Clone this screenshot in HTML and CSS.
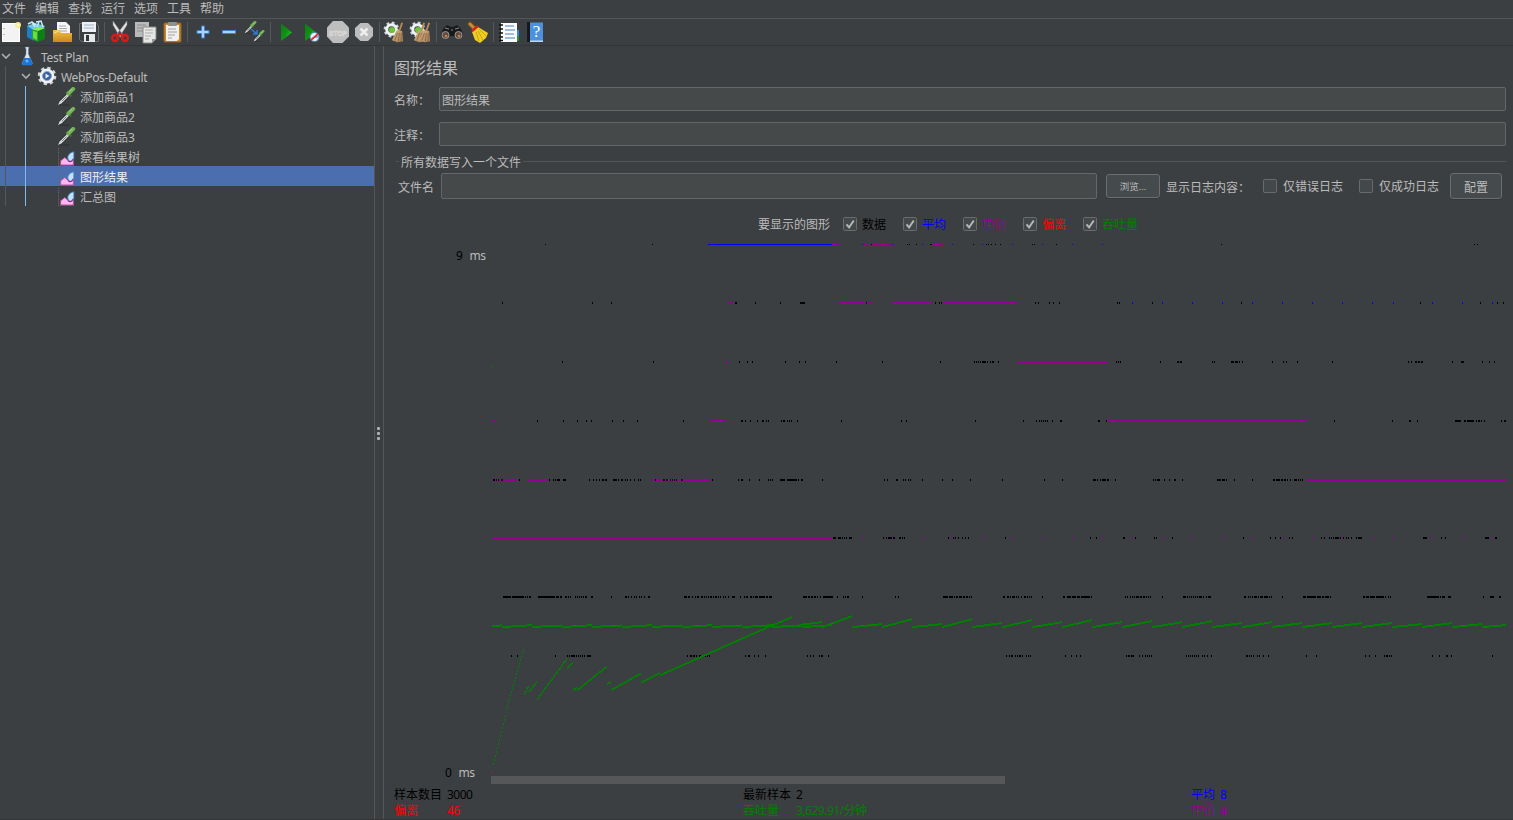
FILE: index.html
```html
<!DOCTYPE html>
<html lang="zh-CN">
<head>
<meta charset="utf-8">
<title>图形结果</title>
<link rel="stylesheet" href="styles.css">
</head>
<body>
<svg class="defs" width="0" height="0">
  <defs>
    <linearGradient id="gGreen" x1="0" y1="0" x2="1" y2="1"><stop offset="0" stop-color="#0a7d10"/><stop offset=".5" stop-color="#0f9216"/><stop offset="1" stop-color="#2be02f"/></linearGradient>
    <linearGradient id="gGold" x1="0" y1="0" x2="0" y2="1"><stop offset="0" stop-color="#f3bd4c"/><stop offset="1" stop-color="#c98a16"/></linearGradient>
    <linearGradient id="gStraw" x1="0" y1="0" x2="1" y2="1"><stop offset="0" stop-color="#d6b183"/><stop offset="1" stop-color="#a37f56"/></linearGradient>
    <symbol id="pipette" viewBox="0 0 20 20">
      <path d="M1 19l2-5 8-8 3 3-8 8z" fill="#23272a"/><path d="M1 19l2-4 8-8 2 2-8 8z" fill="#d8dcd8"/><path d="M5 15l5-5" stroke="#777" stroke-width="1"/>
      <path d="M10 5l5 5" stroke="#3f6b33" stroke-width="2.4"/><path d="M12 7l5-5" stroke="#72b357" stroke-width="4.2" stroke-linecap="round"/><path d="M13 5l3-3" stroke="#a6d58d"/><path d="M3 19h10" stroke="#2b2e30"/>
    </symbol>
    <symbol id="listener" viewBox="0 0 18 18">
      <path d="M1.500 1v16.500H17" fill="none" stroke="#686b6d" stroke-dasharray="1 1"/>
      <path d="M3.500 17v-4l4-3 2 2 3 2 3-3v6z" fill="#ffb6f3" stroke="#b84d9a" stroke-width=".8"/>
      <path d="M16 4.500c-5 1-7 5-5 8 2 3 5 0 5-2z" fill="#bfe2ff" stroke="#3d7cc8" stroke-width=".8"/><path d="M10.500 13c2 2 4 0 5-2" fill="none" stroke="#8d2378"/>
    </symbol>
    <symbol id="gear" viewBox="0 0 20 20">
      <circle cx="10" cy="10" r="7.800" fill="none" stroke="#cfd3d8" stroke-width="3" stroke-dasharray="3.200 2.930"/><circle cx="10" cy="10" r="5.600" fill="none" stroke="#eef0f3" stroke-width="3.600"/>
    </symbol>
    <symbol id="broomhead" viewBox="0 0 14 22">
      <path d="M12 1L9 10" stroke="#b58a55" stroke-width="2"/><path d="M6 9l6 1 1 11-6 1-6-2z" fill="url(#gStraw)"/><path d="M7 12l-3 8M9 12l-1 9M11 12v9" stroke="#785733" stroke-width=".7"/>
    </symbol>
    <symbol id="chevron" viewBox="0 0 12 12"><path d="M2 4l4 4 4-4" fill="none" stroke="#a9abad" stroke-width="1.700"/></symbol>
    <symbol id="tick" viewBox="0 0 14 14"><rect x=".5" y=".5" width="13" height="13" rx="1" fill="#43494a" stroke="#6b6b6b"/><path d="M3.500 7.300l2.600 3L10.800 3.500" fill="none" stroke="#b4b6b7" stroke-width="2"/></symbol>
    <symbol id="box" viewBox="0 0 14 14"><rect x=".5" y=".5" width="13" height="13" rx="1" fill="#43494a" stroke="#6b6b6b"/></symbol>
  </defs>
</svg>

<div class="app">
  <nav class="menu"><span>文件</span><span>编辑</span><span>查找</span><span>运行</span><span>选项</span><span>工具</span><span>帮助</span></nav>

  <div class="toolbar">
    <svg class="tool" viewBox="0 0 24 24"><rect x="3.500" y="3.500" width="17" height="18" fill="#f3f3f3" stroke="#fff"/><path d="M5 8v1M5 14v1" stroke="#888"/><circle cx="19" cy="5" r="3" fill="#f7ee86"/><circle cx="19" cy="5" r="1.300" fill="#fffbd0"/></svg>
    <svg class="tool" viewBox="0 0 24 24"><path d="M2 6l7 2v13l-7-4z" fill="#1b7fc4"/><path d="M2 6l8-3 10 3-2 3-9 1z" fill="#6fc6ee"/><path d="M3 4l4-2 3 5M11 2l5-1 2 6M7 2l4 3M14 2l-2 5" stroke="#c5eaf9" stroke-width="1.500" fill="none"/><path d="M7 9l6 2v11l-6-3z" fill="#25a32c"/><path d="M13 11l7-3v11l-7 3z" fill="#0d7f18"/><path d="M7 9l7-2 6 1-7 3z" fill="#84ed58"/><path d="M8 11l4 1v8l-4-2z" fill="#69dd42"/></svg>
    <svg class="tool" viewBox="0 0 24 24"><path d="M3 10h8v12H3z" fill="#b97e16"/><path d="M6 2h9l4 4v9H6z" fill="#f6f6f6"/><path d="M8 6h7M8 8.500h8M8 11h8" stroke="#a8a8a8"/><path d="M2 10h6l2 3h11v9H2z" fill="url(#gGold)"/><path d="M3 13l5-2" stroke="#ffe09b"/></svg>
    <svg class="tool" viewBox="0 0 24 24"><path d="M2.500 3.500h17l2 2v16h-17l-2-2z" fill="#3b3f42" stroke="#686c6f"/><rect x="5" y="2" width="14" height="10" fill="#eef1f4"/><path d="M7 5h10M7 8h10" stroke="#9bb4c6"/><rect x="7" y="14" width="11" height="8" fill="#e8e8e8"/><rect x="9" y="15" width="3" height="6" fill="#33383b"/></svg>
    <i class="sep"></i>
    <svg class="tool" viewBox="0 0 24 24"><path d="M5 1l10 14-3 2L5 5zM19 1L9 14l3 2 7-11z" fill="#e2e2e2" stroke="#888" stroke-width=".5"/><path d="M11 12l2 3" stroke="#555"/><ellipse cx="7" cy="18" rx="2.800" ry="3" fill="none" stroke="#df1717" stroke-width="2.500"/><ellipse cx="17" cy="18" rx="2.800" ry="3" fill="none" stroke="#df1717" stroke-width="2.500"/><path d="M9 16l3-2 3 2" stroke="#df1717" stroke-width="2" fill="none"/></svg>
    <svg class="tool" viewBox="0 0 24 24"><path d="M1 2h14v15H1z" fill="#b9bbba"/><path d="M3 5h9M3 8h9M3 11h6" stroke="#8d8f8e"/><path d="M9 7h13v12l-4 4H9z" fill="#e6e6e4" stroke="#888"/><path d="M11 10h8M11 13h8M11 16h6M11 19h4" stroke="#adadab"/><path d="M18 23v-4h4" fill="#999"/></svg>
    <svg class="tool" viewBox="0 0 24 24"><rect x="4" y="3" width="17" height="19" rx="1" fill="#c8872b" stroke="#94601a"/><path d="M6 5h13v14l-2 2H6z" fill="#f0f0ee"/><rect x="8" y="2" width="9" height="4" rx="1" fill="#8d9190"/><path d="M8 9h8M8 12h9M8 15h7M8 18h4" stroke="#a0a0a0"/></svg>
    <i class="sep"></i>
    <svg class="tool" viewBox="0 0 24 24"><path d="M10.500 6h3v4.500H18v3h-4.500V18h-3v-4.500H6v-3h4.500z" fill="#a8d2ff" stroke="#4180cb"/></svg>
    <svg class="tool" viewBox="0 0 24 24"><rect x="5.500" y="10.500" width="13" height="3" fill="#a8d2ff" stroke="#4180cb"/></svg>
    <svg class="tool" viewBox="0 0 24 24"><use href="#pipette" x="1" y="1" width="13" height="13"/><use href="#pipette" x="10" y="10" width="12" height="12"/><path d="M8 9l6 5m0-4v4h-4" fill="none" stroke="#287bdd" stroke-width="1.500"/></svg>
    <i class="sep"></i>
    <svg class="tool" viewBox="0 0 24 24"><path d="M7 3.500L18 12.500 7 21z" fill="url(#gGreen)"/></svg>
    <svg class="tool" viewBox="0 0 24 24"><path d="M5 3.500L16 12.500 5 21z" fill="url(#gGreen)"/><circle cx="14.500" cy="17" r="4.500" fill="#e8f2fb" stroke="#4e7fae"/><path d="M11 20l7-6" stroke="#e02b2b" stroke-width="1.700"/><path d="M15 17h3" stroke="#246ebb"/></svg>
    <svg class="tool" viewBox="0 0 24 24"><path d="M7 1h9.500L23 7.500v9L16.500 23H7L1 16.500v-9z" fill="#bebebe"/><text x="12" y="15.500" class="stop" textLength="18" lengthAdjust="spacingAndGlyphs">STOP</text></svg>
    <svg class="tool" viewBox="0 0 24 24"><path d="M8.500 3h7.500l5 5v8l-5 5H8.500l-5.500-5V8z" fill="#bdbdbd"/><path d="M8.500 8.500l7 7m0-7l-7 7" stroke="#eee" stroke-width="2.600"/></svg>
    <i class="sep"></i>
    <svg class="tool" viewBox="0 0 24 24"><use href="#gear" x="0" y="1" width="17" height="17"/><circle cx="9" cy="10" r="3" fill="#6dc437"/><use href="#broomhead" x="8" y="1" width="13" height="22"/></svg>
    <svg class="tool" viewBox="0 0 24 24"><use href="#gear" x="0" y="1" width="17" height="17"/><circle cx="9" cy="10" r="3" fill="#6dc437"/><use href="#broomhead" x="4" y="1" width="13" height="22"/><use href="#broomhead" x="9" y="1" width="13" height="22"/></svg>
    <i class="sep"></i>
    <svg class="tool" viewBox="0 0 24 24"><path d="M3 9l4-4 4 2h2l4-2 4 4 2 6-4 4-5-3h-4l-5 3-4-4z" fill="#191919"/><path d="M5 8l4 1M15 9l4-1M11 10h2" stroke="#8a8a8a"/><circle cx="5.500" cy="15" r="3.500" fill="#624b3b" stroke="#999"/><circle cx="18.500" cy="15" r="3.500" fill="#624b3b" stroke="#999"/><circle cx="6" cy="16" r="1.300" fill="#bc8459"/><circle cx="19" cy="16" r="1.300" fill="#bc8459"/></svg>
    <svg class="tool" viewBox="0 0 24 24"><path d="M4 4l4 4" stroke="#6f4816" stroke-width="5" stroke-linecap="round"/><path d="M4 4l4 4" stroke="#c78b3b" stroke-width="3" stroke-linecap="round"/><path d="M6 12l6-5 10 6-2 5-6 5-5-3z" fill="#f0ce22"/><path d="M10 12l3 9M12 11l5 9M13 9l7 7" stroke="#b99a14" stroke-width=".8"/><path d="M6 11l6-5" stroke="#d2261e" stroke-width="2.500"/></svg>
    <i class="sep"></i>
    <svg class="tool" viewBox="0 0 24 24"><path d="M18 10h4v6h-4z" fill="#2c82e8"/><path d="M18 16h4v5h-4z" fill="#21952b"/><rect x="4" y="3" width="16" height="19" fill="#fafafa"/><path d="M2 5h4M2 9h4M2 13h4M2 17h4M2 20.500h4" stroke="#111" stroke-width="1.500"/><path d="M8 6h9M8 10h10M8 14h9M8 18h10" stroke="#4c82bf"/></svg>
    <svg class="tool" viewBox="0 0 24 24"><path d="M4 2.500h16V22H4z" fill="#4b91dd"/><path d="M4 2h3v20H4z" fill="#15191e"/><path d="M7 20.500h13V22H7z" fill="#bfd8f1"/><text x="13.500" y="17" class="help">?</text></svg>
  </div>

  <main class="body">
    <aside class="tree">
      <div class="node root"><svg class="chev"><use href="#chevron"/></svg><svg class="ico" viewBox="0 0 20 20"><path d="M8 1h4l-.5 2v5l4 9.500-1 1.500H6l-1-1.500L9 8V3z" fill="#dde8f3" stroke="#5c7690" stroke-width=".5"/><path d="M7.200 12h6l2.300 5.500-1 1.500H6l-1-1.500z" fill="#1b76d8"/><circle cx="10" cy="15" r="1.500" fill="#68b0f4"/></svg><span class="latin">Test Plan</span></div>
      <div class="node group"><svg class="chev"><use href="#chevron"/></svg><svg class="ico" viewBox="0 0 20 20"><use href="#gear" width="20" height="20"/><circle cx="10" cy="10" r="4.500" fill="#375f9a" stroke="#8fa8cc"/><path d="M8.500 7.500l4 2.500-4 2.500z" fill="#e3efff"/></svg><span class="latin">WebPos-Default</span></div>
      <div class="node leaf"><svg class="ico"><use href="#pipette"/></svg><span>添加商品1</span></div>
      <div class="node leaf"><svg class="ico"><use href="#pipette"/></svg><span>添加商品2</span></div>
      <div class="node leaf"><svg class="ico"><use href="#pipette"/></svg><span>添加商品3</span></div>
      <div class="node leaf"><svg class="ico"><use href="#listener"/></svg><span>察看结果树</span></div>
      <div class="node leaf selected"><svg class="ico"><use href="#listener"/></svg><span>图形结果</span></div>
      <div class="node leaf"><svg class="ico"><use href="#listener"/></svg><span>汇总图</span></div>
      <i class="guide outer"></i><i class="guide inner"></i>
    </aside>
    <div class="splitter"><i></i><i></i><i></i></div>

    <section class="panel">
      <h1>图形结果</h1>
      <label class="row"><span>名称：</span><span class="field">图形结果</span></label>
      <label class="row second"><span>注释：</span><span class="field"></span></label>
      <div class="legend"><i class="stub"></i><span>所有数据写入一个文件</span><i class="rule"></i></div>
      <div class="file">
        <span class="fname">文件名</span><span class="field"></span>
        <span class="btn small">浏览...</span>
        <span class="logs">显示日志内容：</span>
        <span class="check"><svg><use href="#box"/></svg>仅错误日志</span>
        <span class="check"><svg><use href="#box"/></svg>仅成功日志</span>
        <span class="btn">配置</span>
      </div>
      <div class="series">
        <span class="lead">要显示的图形</span>
        <span class="check black"><svg><use href="#tick"/></svg>数据</span>
        <span class="check blue"><svg><use href="#tick"/></svg>平均</span>
        <span class="check purple"><svg><use href="#tick"/></svg>中值</span>
        <span class="check red"><svg><use href="#tick"/></svg>偏离</span>
        <span class="check green"><svg><use href="#tick"/></svg>吞吐量</span>
      </div>
      <div class="graph">
        <div class="axis"><div class="max"><b>9</b>ms</div><div class="min"><b>0</b>ms</div></div>
        <svg id="plot" width="1022" height="546" viewBox="491 240 1022 546" shape-rendering="crispEdges"></svg>
      </div>
      <div class="stats">
        <span class="black">样本数目</span><span class="black num">3000</span><span class="black">最新样本</span><span class="black num">2</span><span class="blue">平均</span><span class="blue num">8</span>
        <span class="red">偏离</span><span class="red num">46</span><span class="green">吞吐量</span><span class="green num">3,629.91/分钟</span><span class="purple">中值</span><span class="purple num">4</span>
      </div>
    </section>
  </main>
</div>
<script src="chart.js"></script>
</body>
</html>
```
FILE: styles.css
```css
* { box-sizing: border-box; }
body { margin: 0; background: #3c3f41; color: #bbb; font: 12px/16px "Noto Sans", "Noto Sans CJK SC", sans-serif; overflow: hidden; }
.defs { position: absolute; }
.app { display: flex; flex-direction: column; width: 1513px; height: 820px; border-bottom: 1px solid #323435; }
span { white-space: nowrap; }
.black { color: #000; }
.blue { color: #00f; }
.purple { color: #960096; }
.red { color: #f00; }
.green { color: #008000; }

.menu { display: flex; gap: 9px; height: 19px; padding: 1px 0 0 2px; border-bottom: 1px solid #555; }
.toolbar { display: flex; align-items: center; height: 27px; border-bottom: 1px solid #323435; }
.tool { flex: none; width: 24px; height: 24px; margin: 0 1px; }
.tool:first-child { margin-left: -1px; }
.sep { flex: none; width: 1px; height: 20px; margin: 0 2px; background: #55585a; }
.stop { font: bold 8px "Liberation Sans", sans-serif; fill: #bebebe; stroke: #ddd; stroke-width: .6px; text-anchor: middle; }
.help { font: 17px "Liberation Serif", serif; fill: #fff; text-anchor: middle; }

.body { display: flex; flex: 1; min-height: 0; }
.tree { position: relative; width: 374px; }
.node { display: flex; align-items: center; height: 20px; }
.node span { padding-top: 3px; }
.node .latin { letter-spacing: -.3px; }
.chev { width: 12px; height: 12px; margin-right: 5px; }
.ico { width: 20px; height: 20px; margin-right: 4px; }
.group { padding-left: 20px; }
.leaf { padding-left: 57px; }
.leaf .ico { width: 19px; height: 19px; }
.selected { background: #4b6eaf; color: #eee; }
.guide { position: absolute; bottom: auto; width: 1px; }
.outer { left: 5px; top: 20px; height: 140px; background: #55585a; }
.inner { left: 25px; top: 40px; height: 120px; background: #7ebcf2; }
.splitter { display: flex; flex-direction: column; align-items: center; justify-content: center; gap: 2px; width: 10px; padding: 2px 1px 0 0; border: solid #555; border-width: 0 1px; }
.splitter i { width: 3px; height: 3px; border-radius: 1px; background: #b0b0b0; }

.panel { width: 1129px; padding-left: 10px; }
h1 { margin: 11px 0 10px; font: 16px/20px "Noto Sans CJK SC", sans-serif; }
.row { display: flex; align-items: center; height: 24px; }
.row > span:first-child { width: 45px; padding-top: 4px; }
.second { margin-top: 11px; }
.field { display: block; height: 24px; padding: 5px 2px; border: 1px solid #646667; border-radius: 2px; background: #45494a; }
.row .field { width: 1067px; }
.legend { display: flex; align-items: center; height: 16px; width: 1112px; margin-top: 7px; }
.legend span { padding: 4px 2px 0; }
.legend i { height: 1px; background: #515557; }
.stub { width: 3px; margin-left: 2px; }
.rule { flex: 1; }
.file { display: flex; align-items: center; height: 26px; margin-top: 4px; }
.fname { width: 43px; margin-left: 4px; padding-top: 3px; }
.file .field { width: 656px; height: 26px; margin-right: 9px; }
.btn { width: 52px; height: 26px; border: 1px solid #6b6d6e; border-radius: 3px; background: #454a4c; box-shadow: 0 1px #343638; text-align: center; line-height: 27px; }
.small { width: 54px; height: 24px; line-height: 23px; font-size: 9.500px; }
.logs { width: 97px; margin-left: 6px; padding-top: 3px; }
.check { display: flex; align-items: center; gap: 6px; padding-top: 2px; }
.check svg { width: 14px; height: 14px; margin-top: -2px; }
.file .check { margin-right: 16px; }
.file .check + .btn { margin-left: -5px; }
.series { display: flex; align-items: center; gap: 17px; height: 16px; margin: 17px 0 8px 364px; }
.series .check { gap: 5px; }
.lead { margin-right: -4px; padding-top: 2px; }
.graph { display: flex; height: 546px; }
.axis { display: flex; flex-direction: column; justify-content: space-between; width: 97px; padding: 8px 0 5px; letter-spacing: -.4px; }
.axis div { display: flex; gap: 7px; }
.axis b { font-weight: normal; color: #000; }
.max { padding-left: 62px; }
.min { padding-left: 51px; }
#plot { display: block; }
.stats { display: grid; grid-template-columns: 53px 296px 53px 395px 29px auto; padding-top: 1px; }
.num { letter-spacing: -.5px; }
```
FILE: chart.js
```js
const svg = document.getElementById('plot');
const colors = { k: '#000', b: '#00f', p: '#960096', g: '#008000' };

function rect(x, y, w, h, fill) {
  const r = document.createElementNS('http://www.w3.org/2000/svg', 'rect');
  for (const [k, v] of Object.entries({ x, y, width: w, height: h, fill })) r.setAttribute(k, v);
  svg.appendChild(r);
}

// Each level lists marks as "x" or "x:width".
const levels = [
  { y: 244, h: 1,
    p: '832:7 864:3 872:19 932:11',
    b: '708:124 862 892 922 952 982 1012 1042 1072 1102',
    k: '545 652 871 907 909 916 930:2 973 986 988 991 995 1000 1032 1034 1056 1221 1474 1477' },
  { y: 302, h: 2,
    p: '728:5 839:26 867:5 891:41 943:74',
    b: '1132 1162 1192 1222 1252 1282 1312 1342 1372 1393 1432 1462 1492',
    k: '502 592 611 735:2 755 780 800:5 866 935 939 941 1035 1038 1049 1053 1059 1117 1119 1152 1241 1420 1480 1497 1503' },
  { y: 361, h: 2,
    p: '726:2 1017:91',
    k: '562 653 739 747 752 785 799 805 836 882 940 974 976 978 980 982:4 987 990 992:2 998 1116 1118 1120 1160 1177:2 1180:2 1212 1214 1231:3 1235:3 1239 1242 1272 1283 1286 1297 1332 1408 1411 1415:2 1418:2 1421:2 1452 1461:3 1482 1489 1494' },
  { y: 420, h: 2,
    p: '492:3 710:16 1107:200',
    k: '537 563 577 586 591 612 623 637 683 741:2 745 750 757 762:2 766 768 781 783:2 787 789 791 797 841 901 906 975 1023 1036 1039 1041 1043 1045 1047 1052 1060:2 1098:2 1106 1334 1392 1409:2 1417 1455:6 1464:2 1467:7 1476 1478:2 1481 1484 1501 1504:2' },
  { y: 479, h: 2,
    p: '495:22 528:19 652:58 1307:199',
    k: '493:2 496 498 501:2 519 549 553 555 557:3 563:3 589 593 596 599 602:2 605:2 613:4 618 621:2 625 627 630 634 638 640 655 663:2 666:2 670 672 674 676 681:2 712 738 741:2 749 759 768 770 772 780:5 787:10 798 801:2 822 884 887 896:2 903 905 908 910 922 942 952 970 1002 1044 1062 1093:3 1097 1100 1102:4 1107:2 1115 1153 1155 1157:3 1164 1169 1174:2 1182 1217:4 1222:3 1226 1234 1252 1273:2 1276:4 1281:2 1284:2 1287 1290 1294:3 1298 1300 1302' },
  { y: 537, h: 2,
    p: '492:340 862 892 922 952 982 1012 1042 1072 1102 1132 1162 1192 1222 1252 1282 1312 1342 1372 1393 1432 1462 1492',
    k: '833:3 838:3 842 844 846 849:3 883 886 888:4 893:2 899:2 902 904 948 953 955 958 962 965 968 1005 1090 1096 1123:2 1135 1154 1156 1172 1243 1270 1275 1280 1289 1292 1321 1324 1329 1331 1333 1335:4 1340 1343 1346 1348 1351 1356 1358:4 1423:4 1441 1445 1485:4 1495:2' },
  { y: 596, h: 2,
    k: '503:8 512:12 525 527 529:2 538:17 556:3 560:2 565:2 568 570 575 577 579 581 583 585:2 591:2 611 625:2 628 631 634 636 639 641 644 648:2 684:3 688:2 692 695 697:2 701:2 704 706 708 710:2 713 715:2 718 720 723 725 728 732:3 740 744 746:2 750:2 753 755:3 759:6 766:2 769:3 803:4 808:2 811:2 814:2 817 820 823:10 837 843 845 847:2 862 895 898 943:5 949:4 954 956:2 959:3 963:2 966:2 969 971 1003:2 1007:2 1010 1012:3 1016 1018 1021 1024:2 1027 1029 1031 1042 1063:2 1067:4 1072:4 1077:3 1081:9 1091 1125 1127 1130 1132 1134 1136:3 1140:2 1143:2 1146 1148 1150 1162 1183:3 1187 1189 1191 1193 1195 1197 1199:3 1203 1206 1208:3 1244:2 1248 1250 1252 1254:3 1258 1260:3 1264:4 1269 1271 1282 1303:3 1307:9 1317:4 1322:2 1325:4 1330 1363:2 1366:3 1370:5 1376:8 1385 1388 1390 1427:12 1440 1442:3 1448:3 1483 1490:4 1499:2' },
  { y: 655, h: 2,
    k: '511 517 555 567 569 571:4 576 578 580 582 584 587:4 687 690:2 693:2 696 699:2 703 705 707 709 745 748:2 754 758 765 807 810 813 819 821:2 828 1006 1009 1011:2 1015 1017 1019:2 1022 1026 1028 1030 1065 1071 1076 1080 1126 1128:2 1131:3 1139 1142 1145 1147 1149 1151 1186 1188 1190 1192 1194 1196 1198 1202 1204 1207 1211 1246:2 1249 1251 1253 1257 1259 1263 1268 1306 1316 1365 1369 1375 1384 1386:2 1389 1391 1432 1439 1446:2 1451 1492' }
];

for (const level of levels) {
  for (const key of ['p', 'b', 'k']) {
    if (!level[key]) continue;
    for (const mark of level[key].split(' ')) {
      const [x, w = 1] = mark.split(':').map(Number);
      rect(x, level.y, w, level.h, colors[key]);
    }
  }
}

// Throughput: one 1x2 mark for each column of a rising segment.
function rise(x0, y0, x1, y1) {
  for (let x = x0; x < x1; x++) {
    rect(x, Math.round(y0 + (y1 - y0) * (x - x0) / (x1 - x0)) - 1, 1, 2, colors.g);
  }
}

[[493, 764, 506, 712], [506, 709, 524, 646], [524, 694, 527, 689], [526, 688, 529, 687], [529, 691, 537, 681],
 [537, 699, 567, 658], [567, 668, 573, 662], [573, 690, 577, 687], [577, 690, 607, 666], [607, 684, 611, 681],
 [611, 690, 641, 673], [641, 682, 660, 673], [660, 675, 770, 626], [770, 626, 792, 617],
 [799, 625, 822, 622], [822, 627, 852, 616]].forEach(s => rise(...s));

rect(492, 625, 8, 2, colors.g);
rect(500, 624, 2, 2, colors.g);
for (let x = 502; x < 832; x += 30) {
  const last = x % 60 === 22 ? 5 : 1;
  rect(x, 626, 9, 2, colors.g);
  rect(x + 9, 625, 21 - last, 2, colors.g);
  rect(x + 30 - last, 624, last, 2, colors.g);
}
rise(852, 627, 882, 624);
[619, 624, 619, 623, 620, 622, 620, 622, 621, 622, 621, 623, 622, 623, 623, 623, 623, 624, 623, 624]
  .forEach((peak, i) => rise(882 + i * 30, 627, 912 + i * 30, peak));
rise(1482, 627, 1506, 625);

rect(492, 365, 1, 2, colors.g);
rect(492, 772, 1, 1, '#f00');
rect(491, 776, 514, 8, '#555758');
```
